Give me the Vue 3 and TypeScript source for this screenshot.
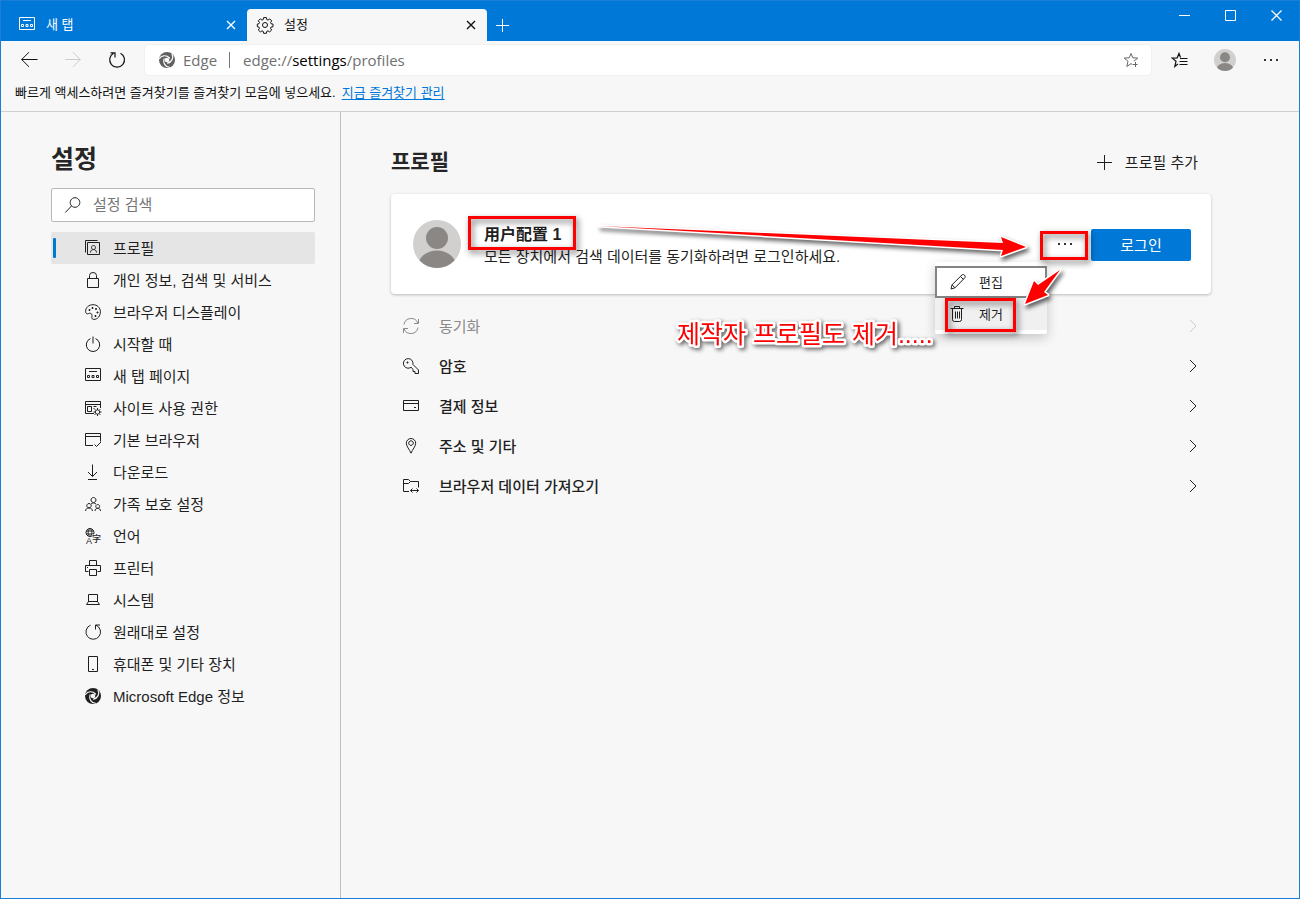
<script setup lang="ts">
import { ref } from 'vue'

interface Entry {
  icon: string
  label: string
  disabled?: boolean
}

const query = ref('')
const selected = ref('profile')

const paths: Record<string, string> = {
  profile: 'M2.5 2.5h12v12h-12z M.5 12.5V.5h12 M8.5 5.5a2 2 0 1 0 .01 0z M5.5 12.5c0-4 6-4 6 0',
  lock: 'M2.5 6.5h11v9h-11z M4.5 6.5v-3a3.5 3 0 0 1 7 0v3',
  palette:
    'M8 .7C3.500.7.6 3.800.6 7.300c0 2.200 1.300 3 2.700 2.300 1.800-.9 3.700-.2 3.700 1.800 0 2-.8 4 1.800 4 4 0 6.600-3.500 6.600-7.600C15.400 3.600 12.200.7 8 .7z M4 5.500h1v1H4z M7 3.500h1v1H7z M10.500 4.500h1v1h-1z M12 8h1v1h-1z M10 11.500h1v1h-1z',
  power: 'M5.500 2.600a6.700 6.700 0 1 0 5 0 M8 .5v7',
  newtab: 'M.5.5h15v12H.5z M4 3.500h8 M2.500 7.500h2v2h-2z M7 7.500h2v2H7z M11.500 7.500h2v2h-2z',
  site: 'M9 13.500H.5V1.500h15V8 M.5 4.500h15 M2.500 6.500h4v5h-4z M8.500 6.500h3 M8.500 8.500h1 M12.500 9.800a2.200 2.200 0 1 0 .01 0z M12.500 8v1.800 M12.500 14.200V16 M8.500 12h1.800 M14.700 12h1.800 M9.700 9.200l1.200 1.200 M14.100 13.600l1.200 1.200 M15.300 9.200l-1.200 1.200 M10.900 13.600l-1.200 1.200',
  browser: 'M8 13.500H.5V1.500h15v8 M.5 4.500h15 M9.500 12.500l2 2 4.500-4.500',
  download: 'M7.500.5v12 M3 8l4.500 4.500L12 8 M3 15.500h9',
  family:
    'M8.500 1.500a2.500 2.500 0 1 0 .01 0z M4 7.500a2.200 2.200 0 1 0 .01 0z M12.700 8.500a1.900 1.900 0 1 0 .01 0z M.6 15c0-4.200 6.800-4.200 6.800 0 M10 15c0-3.600 5.500-3.600 5.500 0 M6 8.200c1-1.700 4-1.700 5 0',
  printer: 'M3.500 11.500h-3v-6h15v6h-3 M4.500 5.500v-5h7v5 M4.500 9.500h7v6h-7z M2 7.500h1',
  system: 'M3.500 2.500h9v7l2 3H1.500l2-3z M3 9.500h10',
  reset: 'M5.500 1.200A7.300 7.300 0 1 0 11 1.200 M10.500 5.500v-4.500h4.500',
  phone: 'M3.500.5h9v15h-9z M7 13.500h2',
  sync: 'M1 6.500A7.200 7.200 0 0 1 14.800 5 M15.500 1v4.500H11 M15 9.500A7.200 7.200 0 0 1 1.200 11 M.5 15v-4.500H5',
  key: 'M6.900 9.900a4.800 4.800 0 1 1 3-3.500L15.500 12v3.500H12v-2h-2v-2L8.200 9.200z M4 4h1v1H4z',
  card: 'M.5 2.500h15v10H.5z M.5 5.500h15 M11 9.500h2',
  pin: 'M8 15.200C6.500 11.500 3.300 8.200 3.300 5.200a4.700 4.700 0 0 1 9.400 0c0 3-3.200 6.300-4.700 10z M8 2.800a2.300 2.300 0 1 0 .01 0z',
  folder: 'M6 13.500H.5V1.500h5l2 2h8v6 M.5 5.500h5l2-2 M7.500 12.500h8 M9.500 10.500l-2 2 2 2 M13.500 10.500l2 2-2 2',
  search: 'M10 .7a4.800 4.800 0 1 0 .01 0z M6.500 9L.3 15.500',
  back: 'M.5 7.500h16 M8 .2L.7 7.500 8 14.800',
  forward: 'M0 7.500h15.500 M8 .2L15.300 7.500 8 14.800',
  reload: 'M11.500 1.200A7.400 7.400 0 1 1 4.500 1.300 M1.500.8h4.500v4.700',
  star: 'M8 1.500l1.800 4.300 5 .3-3.900 3.100 M8 1.500L6.200 5.800l-5 .3L5 9.300 3.800 14.500 8 11.600l1 .7 M9.500 12.500h5 M12.500 10v5',
  favorites: 'M9.500 5.500L8 1.500 6.200 5.800l-5 .3L5 9.300 3.800 14.500 7 12 M9 6.500h7.500 M8.500 9.500h8 M8.500 12.500h8',
  edit: 'M1 15l1-4.200L12 .9c1.800-1.200 4 1 2.900 2.800L5 13.800z M2 10.800l3 3 M10.500 2.500l3 3',
  trash: 'M.5 2.500h13 M4.500 2.500v-2h5v2 M2.500 2.500v11q0 2 2 2h5q2 0 2-2v-11 M5.500 5.500v7 M7.500 5.500v7 M9.500 5.500v7',
  plus: 'M7.500 0v15 M0 7.500h15',
  tabPlus: 'M6.500 0v13 M0 6.500h13',
  chevron: 'M5 2l6 6-6 6',
  close: 'M4 4l8 8 M12 4l-8 8',
}

const sections: Entry[] = [
  { icon: 'profile', label: '프로필' },
  { icon: 'lock', label: '개인 정보, 검색 및 서비스' },
  { icon: 'palette', label: '브라우저 디스플레이' },
  { icon: 'power', label: '시작할 때' },
  { icon: 'newtab', label: '새 탭 페이지' },
  { icon: 'site', label: '사이트 사용 권한' },
  { icon: 'browser', label: '기본 브라우저' },
  { icon: 'download', label: '다운로드' },
  { icon: 'family', label: '가족 보호 설정' },
  { icon: 'language', label: '언어' },
  { icon: 'printer', label: '프린터' },
  { icon: 'system', label: '시스템' },
  { icon: 'reset', label: '원래대로 설정' },
  { icon: 'phone', label: '휴대폰 및 기타 장치' },
  { icon: 'edge', label: 'Microsoft Edge 정보' },
]

const rows: Entry[] = [
  { icon: 'sync', label: '동기화', disabled: true },
  { icon: 'key', label: '암호' },
  { icon: 'card', label: '결제 정보' },
  { icon: 'pin', label: '주소 및 기타' },
  { icon: 'folder', label: '브라우저 데이터 가져오기' },
]
</script>

<template>
  <div class="window">
    <svg class="defs" aria-hidden="true">
      <defs>
        <symbol id="edge-logo" viewBox="0 0 16 16">
          <circle cx="8" cy="8" r="8" fill="currentColor" />
          <g class="swirl" fill="none" stroke-width="1.200" stroke-linecap="round">
            <path d="M.5 6.500C2.500 3.200 7.500 2.700 10.500 6" />
            <path d="M.5 6.500C2.500 3.200 7.500 2.700 10.500 6" transform="rotate(120 8 8)" />
            <path d="M.5 6.500C2.500 3.200 7.500 2.700 10.500 6" transform="rotate(240 8 8)" />
          </g>
          <circle class="hole" cx="8" cy="8" r="2.300" />
        </symbol>
        <symbol id="person" viewBox="0 0 48 48">
          <clipPath id="disc"><circle cx="24" cy="24" r="24" /></clipPath>
          <circle cx="24" cy="24" r="24" fill="#d2d0ce" />
          <g clip-path="url(#disc)" fill="#8a8785">
            <circle cx="24" cy="18" r="11" />
            <ellipse cx="24" cy="46" rx="19" ry="15.500" />
          </g>
        </symbol>
      </defs>
    </svg>

    <header class="titlebar">
      <div class="tab">
        <svg class="icon" viewBox="0 0 16 16"><path :d="paths.newtab" /></svg>
        <span class="tab-title">새 탭</span>
        <button class="tab-close" aria-label="새 탭 닫기">
          <svg class="icon bold" viewBox="0 0 16 16"><path :d="paths.close" /></svg>
        </button>
      </div>
      <div class="tab active">
        <svg class="icon" viewBox="0 0 16 16">
          <circle cx="8" cy="8" r="2.500" />
          <path
            d="M6.600.6h2.800l.4 2 1.200.5 1.800-1.200 1.900 2-1.200 1.700.5 1.100 2 .4v2.600l-2 .4-.5 1.200 1.200 1.700-2 1.900-1.700-1.100-1.200.5-.4 2H6.600l-.4-2-1.200-.5-1.700 1.100-2-1.900L2.500 11.300 2 10.100l-1.700-.4V7.100L2 6.700l.5-1.200-1.200-1.700 2-1.900L5 3.100l1.200-.5z"
          />
        </svg>
        <span class="tab-title">설정</span>
        <button class="tab-close" aria-label="설정 닫기">
          <svg class="icon bold" viewBox="0 0 16 16"><path :d="paths.close" /></svg>
        </button>
      </div>
      <button class="new-tab" aria-label="새 탭 열기">
        <svg class="icon small" viewBox="0 0 13 13"><path :d="paths.tabPlus" /></svg>
      </button>
      <div class="controls">
        <button aria-label="최소화"><svg viewBox="0 0 11 11"><path d="M0 5.500h11" /></svg></button>
        <button aria-label="최대화"><svg viewBox="0 0 11 11"><path d="M.5.5h10v10h-10z" /></svg></button>
        <button aria-label="닫기">
          <svg class="quit" viewBox="0 0 11 11"><path d="M.5.5l10 10M10.500.5l-10 10" /></svg>
        </button>
      </div>
    </header>

    <div class="toolbar">
      <button class="tool" aria-label="뒤로">
        <svg class="icon" viewBox="0 0 16 16"><path :d="paths.back" /></svg>
      </button>
      <button class="tool off" aria-label="앞으로" disabled>
        <svg class="icon" viewBox="0 0 16 16"><path :d="paths.forward" /></svg>
      </button>
      <button class="tool" aria-label="새로 고침">
        <svg class="icon firm" viewBox="0 0 16 16"><path :d="paths.reload" /></svg>
      </button>
      <div class="address">
        <svg class="icon logo"><use href="#edge-logo" /></svg>
        <span class="origin">Edge</span>
        <span class="url">edge://<b>settings</b>/profiles</span>
        <button class="tool star" aria-label="즐겨찾기에 추가">
          <svg class="icon" viewBox="0 0 16 16"><path :d="paths.star" /></svg>
        </button>
      </div>
      <div class="actions">
        <button class="tool" aria-label="즐겨찾기">
          <svg class="icon firm" viewBox="0 0 16 16"><path :d="paths.favorites" /></svg>
        </button>
        <button class="tool" aria-label="프로필">
          <svg class="me"><use href="#person" /></svg>
        </button>
        <button class="tool" aria-label="메뉴">
          <svg class="dots" viewBox="0 0 16 4"><path d="M1 1h2v2H1zM7 1h2v2H7zM13 1h2v2h-2z" /></svg>
        </button>
      </div>
    </div>

    <div class="bookmarks">
      <span>빠르게 액세스하려면 즐겨찾기를 즐겨찾기 모음에 넣으세요.</span>
      <a href="#favorites">지금 즐겨찾기 관리</a>
    </div>

    <div class="page">
      <aside class="sidebar">
        <h1>설정</h1>
        <label class="search">
          <svg class="icon" viewBox="0 0 16 16"><path :d="paths.search" /></svg>
          <input v-model="query" type="text" placeholder="설정 검색" aria-label="설정 검색" />
        </label>
        <nav>
          <button
            v-for="s in sections"
            :key="s.icon"
            class="section"
            :class="{ current: s.icon === selected }"
            @click="selected = s.icon"
          >
            <svg v-if="s.icon === 'edge'" class="icon"><use href="#edge-logo" /></svg>
            <svg v-else-if="s.icon === 'language'" class="icon lang" viewBox="0 0 16 16">
              <path d="M5 .5a4 4 0 1 0 .01 0z M1 3h8 M1 6h8 M5 .5c-2.500 2-2.500 6 0 8 M5 .5c2.500 2 2.500 6 0 8" />
              <text x="1" y="16" font-size="9">A</text>
              <text x="7" y="14" font-size="9">字</text>
            </svg>
            <svg v-else class="icon" viewBox="0 0 16 16"><path :d="paths[s.icon]" /></svg>
            <span class="label">{{ s.label }}</span>
          </button>
        </nav>
      </aside>

      <main class="content">
        <div class="heading">
          <h2>프로필</h2>
          <button class="add">
            <svg class="icon plus" viewBox="0 0 15 15"><path :d="paths.plus" /></svg>
            <span class="label">프로필 추가</span>
          </button>
        </div>

        <section class="card">
          <svg class="avatar"><use href="#person" /></svg>
          <div class="who">
            <strong lang="zh-CN">用户配置 1</strong>
            <span>모든 장치에서 검색 데이터를 동기화하려면 로그인하세요.</span>
          </div>
          <div class="more-wrap">
            <button class="more" aria-label="기타 작업">
              <svg class="dots" viewBox="0 0 16 4"><path d="M1 1h2v2H1zM7 1h2v2H7zM13 1h2v2h-2z" /></svg>
            </button>
            <div class="menu">
              <button class="focused">
                <svg class="icon" viewBox="0 0 16 16"><path :d="paths.edit" /></svg>
                <span class="label">편집</span>
              </button>
              <button class="hovered">
                <svg class="icon" viewBox="0 0 16 16"><path :d="paths.trash" /></svg>
                <span class="label">제거</span>
              </button>
            </div>
          </div>
          <button class="login"><span class="label">로그인</span></button>

          <svg class="notes" width="820" height="170" viewBox="0 0 820 170">
            <g class="frames">
              <rect x="78.500" y="23.500" width="105" height="31" />
              <rect x="650.500" y="38.500" width="45" height="26" />
              <rect x="555.500" y="105.500" width="68" height="31" />
            </g>
            <g class="arrows">
              <path d="M208 32L612 49 610 43 635 53 610 62 612 56z" />
              <path d="M669 76L647 91 643 87 634 110 657 101 653 98z" />
            </g>
            <text class="caption" x="286" y="149">제작자 프로필도 제거.....</text>
          </svg>
        </section>

        <div class="rows">
          <button v-for="r in rows" :key="r.icon" class="row" :disabled="r.disabled">
            <svg class="icon" viewBox="0 0 16 16"><path :d="paths[r.icon]" /></svg>
            <span class="label">{{ r.label }}</span>
            <svg class="icon chevron" viewBox="0 0 16 16"><path :d="paths.chevron" /></svg>
          </button>
        </div>
      </main>
    </div>
  </div>
</template>

<style>
body {
  background: #f7f7f7;
}
</style>

<style scoped>
.window {
  --bg: #f7f7f7;
  box-sizing: border-box;
  min-height: 100vh;
  display: flex;
  flex-direction: column;
  border: 1px solid #1a80d6;
  background: var(--bg);
  color: #1f1f1f;
  font-family: 'Liberation Sans', 'Noto Sans CJK KR', sans-serif;
  font-size: 15px;
  line-height: 20px;
}
.window *,
.window *::before {
  box-sizing: border-box;
}
button {
  padding: 0;
  border: 0;
  background: none;
  color: inherit;
  font: inherit;
  display: flex;
  align-items: center;
}
.label {
  padding-top: 2px;
}
.defs {
  position: absolute;
  width: 0;
  height: 0;
}
.icon {
  flex: none;
  width: 16px;
  height: 16px;
  fill: none;
  stroke: currentColor;
  stroke-width: 1;
  overflow: visible;
}
.icon.small {
  width: 13px;
  height: 13px;
}
.icon.plus {
  width: 15px;
  height: 15px;
}
.icon.bold {
  stroke-width: 1.4;
}
.icon.firm {
  stroke-width: 1.2;
}
.icon use {
  stroke: none;
}
.swirl {
  stroke: var(--bg);
}
.hole {
  fill: var(--bg);
  stroke: none;
}

.titlebar {
  display: flex;
  align-items: flex-end;
  height: 40px;
  background: #0078d7;
  color: #fff;
  font-size: 13px;
}
.tab {
  display: flex;
  align-items: center;
  width: 240px;
  height: 32px;
  margin-left: 6px;
  padding: 0 8px 0 12px;
}
.tab.active {
  margin-left: 0;
  padding-left: 10px;
  border-radius: 4px 4px 0 0;
  background: var(--bg);
  color: #111;
}
.tab-title {
  flex: 1;
  margin-left: 11px;
}
.new-tab {
  height: 32px;
  padding: 0 9px;
}
.controls {
  display: flex;
  align-self: flex-start;
  margin-left: auto;
}
.controls button {
  width: 46px;
  height: 28px;
  justify-content: center;
}
.controls svg {
  width: 11px;
  height: 11px;
  fill: none;
  stroke: #fff;
}
.controls .quit {
  stroke-width: 1.3;
}

.toolbar {
  display: flex;
  align-items: center;
  height: 38px;
  padding-left: 6px;
}
.tool {
  flex: none;
  width: 44px;
  height: 30px;
  justify-content: center;
  color: #111;
}
.tool.off {
  color: #ccc;
}
.address {
  --bg: #fff;
  flex: 1;
  display: flex;
  align-items: center;
  height: 30px;
  margin-left: 6px;
  padding-left: 14px;
  border-radius: 4px;
  background: var(--bg);
  box-shadow: 0 0 2px rgba(0, 0, 0, 0.1);
  color: #6f6f6f;
  font-family: 'Open Sans', sans-serif;
  font-size: 15px;
}
.address .logo {
  color: #606060;
}
.origin {
  margin-left: 8px;
  padding-right: 12px;
  line-height: 16px;
  border-right: 1px solid #777;
}
.url {
  flex: 1;
  margin-left: 13px;
}
.url b {
  color: #000;
  font-weight: 400;
}
.tool.star {
  width: 40px;
  color: #666;
}
.actions {
  display: flex;
  width: 148px;
  padding-left: 6px;
  gap: 2px;
}
.me {
  width: 22px;
  height: 22px;
}
.dots {
  width: 16px;
  height: 4px;
  fill: #333;
}
.bookmarks {
  display: flex;
  gap: 6px;
  height: 33px;
  padding: 4px 14px 0;
  border-bottom: 1px solid #d0d0d0;
  color: #111;
  font-size: 13px;
}
.bookmarks a {
  color: #0078d7;
  text-underline-offset: 2px;
}

.page {
  flex: 1;
  display: flex;
}
.sidebar {
  flex: none;
  width: 340px;
  padding: 30px 25px 0 50px;
  border-right: 1px solid #bebebe;
}
h1,
h2 {
  margin: 0;
  font-weight: 700;
  color: #262626;
}
h1 {
  height: 46px;
  font-size: 25px;
  line-height: 34px;
}
.search {
  display: flex;
  align-items: center;
  height: 34px;
  margin-bottom: 10px;
  padding-left: 13px;
  border: 1px solid #b8b8b8;
  border-radius: 2px;
  background: #fff;
}
.search input {
  flex: 1;
  min-width: 0;
  margin-left: 12px;
  padding: 0;
  border: 0;
  outline: 0;
  background: none;
  font: inherit;
}
.search input::placeholder {
  color: #767676;
  opacity: 1;
}
.section {
  position: relative;
  width: 100%;
  height: 32px;
  padding-left: 34px;
  gap: 12px;
  border-radius: 2px;
  text-align: left;
}
.section.current {
  background: #e5e5e5;
}
.section.current::before {
  content: '';
  position: absolute;
  left: 2px;
  top: 6px;
  width: 3px;
  height: 20px;
  border-radius: 1px;
  background: #0078d4;
}
.lang text {
  fill: #1f1f1f;
  stroke: var(--bg);
  stroke-width: 1;
  paint-order: stroke;
  font-weight: 500;
}

.content {
  flex: 1;
  min-width: 0;
  max-width: 920px;
  padding: 34px 50px;
}
.heading {
  display: flex;
  align-items: center;
  justify-content: space-between;
  height: 32px;
  margin-bottom: 16px;
}
h2 {
  font-size: 21px;
  line-height: 32px;
}
.add {
  gap: 13px;
  padding-right: 13px;
}
.card {
  position: relative;
  display: flex;
  align-items: center;
  height: 100px;
  margin-bottom: 12px;
  padding: 0 20px 0 22px;
  border-radius: 4px;
  background: #fff;
  box-shadow: 0 1px 3px rgba(0, 0, 0, 0.25);
}
.avatar {
  flex: none;
  width: 48px;
  height: 48px;
}
.who {
  flex: 1;
  display: flex;
  flex-direction: column;
  margin-left: 23px;
  padding-top: 2px;
}
.who strong {
  font-family: 'Liberation Sans', 'Noto Sans CJK SC', sans-serif;
  font-size: 16px;
  line-height: 24px;
}
.more-wrap {
  position: relative;
}
.more {
  width: 52px;
  height: 32px;
  justify-content: center;
}
.menu {
  position: absolute;
  z-index: 1;
  top: 34px;
  right: 44px;
  width: 112px;
  padding: 4px 0;
  border-radius: 2px;
  background: #fff;
  box-shadow: 0 4px 12px rgba(0, 0, 0, 0.2);
  font-size: 13px;
}
.menu button {
  width: 100%;
  height: 32px;
  padding-left: 15px;
  gap: 13px;
}
.menu .focused {
  padding-left: 13px;
  border: 2px solid #848484;
}
.menu .hovered {
  background: #f0f0f0;
}
.login {
  width: 100px;
  height: 32px;
  margin-top: 2px;
  justify-content: center;
  border-radius: 2px;
  background: #0078d7;
  color: #fff;
}
.notes {
  position: absolute;
  z-index: 2;
  left: 0;
  top: 0;
  overflow: visible;
  pointer-events: none;
}
.frames {
  fill: none;
  stroke: #f00;
  stroke-width: 3;
  filter: drop-shadow(2px 3px 3px rgba(0, 0, 0, 0.6));
}
.arrows {
  fill: #f00;
  stroke: #fff;
  stroke-width: 3;
  stroke-linejoin: round;
  paint-order: stroke;
  filter: drop-shadow(2px 3px 2px rgba(0, 0, 0, 0.6));
}
.caption {
  fill: #f00;
  stroke: #fff;
  stroke-width: 5;
  stroke-linejoin: round;
  paint-order: stroke;
  font-size: 25px;
  filter: drop-shadow(2px 2px 2px rgba(0, 0, 0, 0.6));
}
.row {
  width: 100%;
  height: 40px;
  padding: 0 10px 0 12px;
  gap: 20px;
  font-weight: 500;
}
.row:disabled {
  color: #8a8a8a;
  font-weight: 400;
}
.chevron {
  margin-left: auto;
}
.row:disabled .chevron {
  color: #ccc;
}
</style>
